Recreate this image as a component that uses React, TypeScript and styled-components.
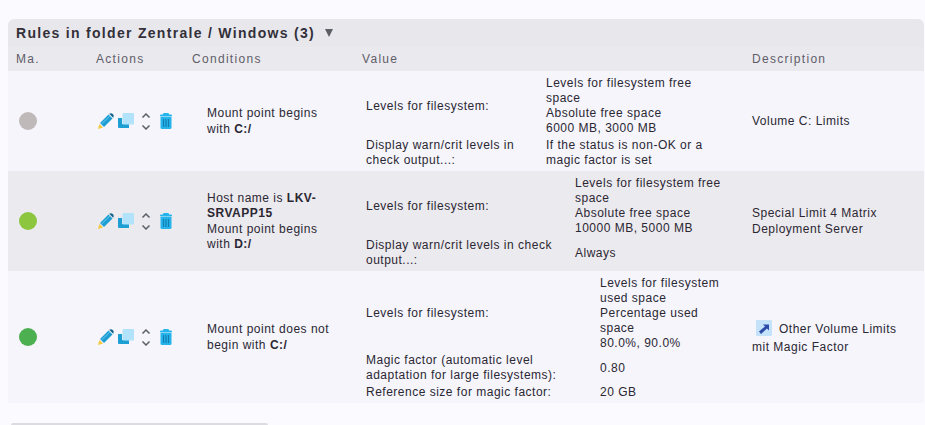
import styled, { createGlobalStyle } from "styled-components";

interface ValueRow {
  label: string;
  lines: string[];
}

interface Rule {
  color: string;
  height: number;
  conditions: React.ReactNode;
  valueColumn: number;
  valueWidth: number;
  values: ValueRow[];
  description: string;
  linked?: boolean;
  shaded?: boolean;
}

const rules: Rule[] = [
  {
    color: "#c0b9b9",
    height: 100,
    conditions: (
      <>
        Mount point begins with <b>C:/</b>
      </>
    ),
    valueColumn: 180,
    valueWidth: 165,
    values: [
      {
        label: "Levels for filesystem:",
        lines: [
          "Levels for filesystem free space",
          "Absolute free space",
          "6000 MB, 3000 MB",
        ],
      },
      {
        label: "Display warn/crit levels in check output...:",
        lines: ["If the status is non-OK or a magic factor is set"],
      },
    ],
    description: "Volume C: Limits",
  },
  {
    color: "#8cc63f",
    height: 100,
    shaded: true,
    conditions: (
      <>
        Host name is <b>LKV-SRVAPP15</b>
        <br />
        Mount point begins with <b>D:/</b>
      </>
    ),
    valueColumn: 209,
    valueWidth: 165,
    values: [
      {
        label: "Levels for filesystem:",
        lines: [
          "Levels for filesystem free space",
          "Absolute free space",
          "10000 MB, 5000 MB",
        ],
      },
      {
        label: "Display warn/crit levels in check output...:",
        lines: ["Always"],
      },
    ],
    description: "Special Limit 4 Matrix Deployment Server",
  },
  {
    color: "#4caf50",
    height: 132,
    conditions: (
      <>
        Mount point does not begin with <b>C:/</b>
      </>
    ),
    valueColumn: 234,
    valueWidth: 130,
    values: [
      {
        label: "Levels for filesystem:",
        lines: [
          "Levels for filesystem used space",
          "Percentage used space",
          "80.0%, 90.0%",
        ],
      },
      {
        label: "Magic factor (automatic level adaptation for large filesystems):",
        lines: ["0.80"],
      },
      { label: "Reference size for magic factor:", lines: ["20 GB"] },
    ],
    description: "Other Volume Limits mit Magic Factor",
    linked: true,
  },
];

const PencilIcon = () => (
  <svg width="16" height="16" viewBox="0 0 16 16">
    <path d="M0 16 L1.4 11 L5 14.6 Z" fill="#f5c73d" />
    <path d="M2 10 L10.5 1.5 L14.5 5.5 L6 14 Z" fill="#1d9fd3" />
    <path d="M3.5 11 L12 2.8" stroke="#6cc8ec" strokeWidth="1" />
    <path d="M11.2 0.8 Q13 -0.4 14.8 1 Q16.4 2.8 15.2 4.8 Z" fill="#15638a" />
  </svg>
);

const CloneIcon = () => (
  <svg width="16" height="16" viewBox="0 0 16 16">
    <path d="M0 5 H4 V11 H11 V15 H1 Q0 15 0 14 Z" fill="#1d9fd3" />
    <rect x="4.5" y="0" width="11.5" height="11.5" rx="1" fill="#b3e3fa" />
  </svg>
);

const MoveIcon = () => (
  <svg width="10" height="17" viewBox="0 0 10 17">
    <path
      d="M1.5 4.5 L5 1 L8.5 4.5 M1.5 12.5 L5 16 L8.5 12.5"
      fill="none"
      stroke="#5a5f68"
      strokeWidth="1.5"
    />
  </svg>
);

const TrashIcon = () => (
  <svg width="12" height="16" viewBox="0 0 12 16">
    <path d="M3 1 Q3 0 4.5 0 H7.5 Q9 0 9 1 V2 H3 Z" fill="#25b4ec" />
    <rect x="0" y="1.5" width="12" height="2" rx="1" fill="#25b4ec" />
    <path d="M0.5 4 H11.5 V14.5 Q11.5 16 10 16 H2 Q0.5 16 0.5 14.5 Z" fill="#25b4ec" />
    <path d="M3.5 6 V14 M6 6 V14 M8.5 6 V14" stroke="#127fb0" strokeWidth="1.2" />
  </svg>
);

const LinkIcon = () => (
  <svg width="16" height="16" viewBox="0 0 16 16">
    <rect width="16" height="16" rx="1" fill="#c4e3fb" />
    <path d="M3 11.5 L9 6.5 L7 4.5 H13 V10.5 L11 8.5 L5 14 Z" fill="#2c4aa8" />
  </svg>
);

export default function App() {
  return (
    <>
      <GlobalStyle />
      <Page>
        <TopNote>51618</TopNote>
        <Panel>
          <PanelTitle>
            Rules in folder Zentrale / Windows (3)
            <Caret />
          </PanelTitle>
          <HeaderRow>
            <span>Ma.</span>
            <span>Actions</span>
            <span>Conditions</span>
            <span>Value</span>
            <span>Description</span>
          </HeaderRow>
          {rules.map((rule, index) => (
            <RuleRow key={index} $shaded={rule.shaded} $height={rule.height}>
              <Cell>
                <StateDot $color={rule.color} />
              </Cell>
              <Actions>
                <PencilIcon />
                <CloneIcon />
                <MoveIcon />
                <TrashIcon />
              </Actions>
              <ConditionCell>
                <div>{rule.conditions}</div>
              </ConditionCell>
              <ValueCell>
                {rule.values.map((row, i) => (
                  <ValueLine
                    key={i}
                    $column={rule.valueColumn}
                    $width={rule.valueWidth}
                  >
                    <ValueLabel>{row.label}</ValueLabel>
                    <div>
                      {row.lines.map((line, j) => (
                        <div key={j}>{line}</div>
                      ))}
                    </div>
                  </ValueLine>
                ))}
              </ValueCell>
              <Cell>
                <Description>
                  {rule.linked && (
                    <LinkBox>
                      <LinkIcon />
                    </LinkBox>
                  )}
                  {rule.description}
                </Description>
              </Cell>
            </RuleRow>
          ))}
        </Panel>
        <NextPanelEdge />
      </Page>
    </>
  );
}

const GlobalStyle = createGlobalStyle`
  html, body {
    margin: 0;
    padding: 0;
    background: #fbfaff;
    overflow: hidden;
  }
  body {
    font-family: "Liberation Sans", Arial, sans-serif;
    font-size: 12px;
    color: #2b2733;
  }
`;

const columns = "80px 96px 170px 390px 1fr";

const Page = styled.div`
  width: 925px;
  height: 425px;
  overflow: hidden;
  position: relative;
  padding-top: 19px;
  box-sizing: border-box;
`;

const TopNote = styled.div`
  position: absolute;
  top: -11px;
  right: 3px;
  font-size: 12px;
  letter-spacing: 0.5px;
`;

const Panel = styled.div`
  margin-left: 8px;
  width: 916px;
`;

const PanelTitle = styled.div`
  height: 28px;
  display: flex;
  align-items: center;
  padding-left: 8px;
  background: #e8e7ec;
  border-radius: 6px 6px 0 0;
  font-size: 14px;
  font-weight: bold;
  letter-spacing: 1.3px;
  color: #33303a;
`;

const Caret = styled.span`
  margin-left: 10px;
  width: 0;
  height: 0;
  border-left: 4.5px solid transparent;
  border-right: 4.5px solid transparent;
  border-top: 8px solid #5d5f66;
`;

const HeaderRow = styled.div`
  display: grid;
  grid-template-columns: ${columns};
  height: 24px;
  align-items: center;
  padding-left: 8px;
  background: #eae9ee;
  color: #5f5d68;
  letter-spacing: 1.3px;
`;

const RuleRow = styled.div<{ $shaded?: boolean; $height: number }>`
  display: grid;
  grid-template-columns: ${columns};
  height: ${({ $height }) => $height}px;
  padding-left: 8px;
  background: ${({ $shaded }) => ($shaded ? "#ebeaee" : "#f5f5fb")};
  line-height: 15px;
  letter-spacing: 0.5px;
`;

const Cell = styled.div`
  display: flex;
  align-items: center;
`;

const StateDot = styled.span<{ $color: string }>`
  display: block;
  margin-left: 3px;
  width: 18px;
  height: 18px;
  border-radius: 50%;
  background: ${({ $color }) => $color};
`;

const Actions = styled.div`
  display: grid;
  grid-template-columns: 20px 23px 19px 12px;
  align-items: center;
  padding-left: 2px;
`;

const ConditionCell = styled(Cell)`
  padding: 1px 18px 0 15px;
  line-height: 15.4px;
`;

const ValueCell = styled.div`
  display: flex;
  flex-direction: column;
  justify-content: center;
  gap: 2px;
  padding: 2px 0 0 4px;
`;

const ValueLine = styled.div<{ $column: number; $width: number }>`
  display: grid;
  grid-template-columns: ${({ $column }) => $column}px ${({ $width }) => $width}px;
  align-items: center;
`;

const ValueLabel = styled.div`
  padding-right: 14px;
`;

const Description = styled.div`
  padding-right: 10px;
  line-height: 16px;
`;

const LinkBox = styled.span`
  display: inline-block;
  vertical-align: -3px;
  margin: 0 7px 0 4px;
  height: 19px;
`;

const NextPanelEdge = styled.div`
  margin: 20px 0 0 11px;
  width: 257px;
  height: 8px;
  background: #dcdbe1;
  border-radius: 2px 2px 0 0;
`;
